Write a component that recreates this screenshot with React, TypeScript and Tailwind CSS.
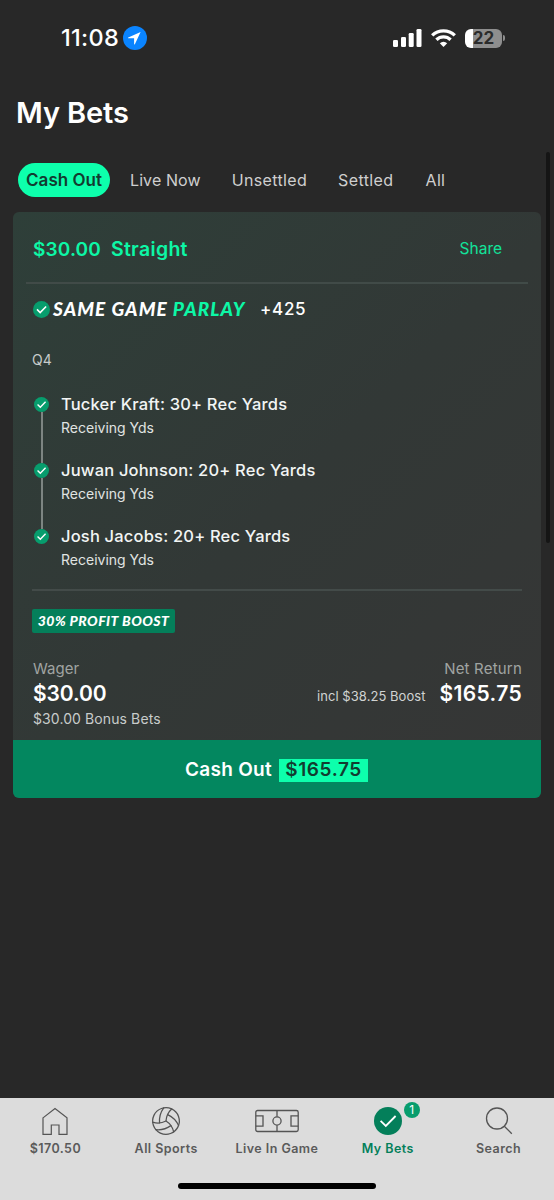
import React from 'react';
import { Volleyball } from 'lucide-react';

interface Leg {
  player: string;
  market: string;
}

const tabs = [
  { label: 'Live Now', className: 'ml-5 tracking-[0.1px]' },
  { label: 'Unsettled', className: 'ml-[31px] tracking-[0.35px]' },
  { label: 'Settled', className: 'ml-[31px] tracking-[0.4px]' },
  { label: 'All', className: 'ml-8 tracking-[0.3px]' },
];

const legs: Leg[] = [
  { player: 'Tucker Kraft: 30+ Rec Yards', market: 'Receiving Yds' },
  { player: 'Juwan Johnson: 20+ Rec Yards', market: 'Receiving Yds' },
  { player: 'Josh Jacobs: 20+ Rec Yards', market: 'Receiving Yds' },
];

function CheckIcon({ className, fill, strokeWidth }: { className: string; fill: string; strokeWidth: number }) {
  return (
    <svg viewBox="0 0 28 28" className={className} fill="none">
      <circle cx="14" cy="14" r="14" fill={fill} />
      <path d="M6.600 13.800l5.200 5.200L21.600 9" stroke="#fff" strokeWidth={strokeWidth} />
    </svg>
  );
}

function StatusBar() {
  return (
    <div className="flex h-[76px] shrink-0 items-center pl-[61px] pr-[49px]">
      <span className="w-[62px] text-[23.5px] leading-none font-medium text-white tracking-[0.3px] whitespace-nowrap">11:08</span>
      <svg viewBox="0 0 24 24" className="size-6">
        <circle cx="12" cy="12" r="12" fill="#0a84ff" />
        <path d="M17.6 6.1L5.3 11.4c-.5.2-.4.9.2.9h5.6v5.6c0 .6.7.7.9.2z" fill="#fff" />
      </svg>
      <div className="ml-auto flex items-center">
        <svg viewBox="0 0 29 18" className="h-[18px] w-[29px]" fill="#fff">
          <rect x="0" y="11" width="5" height="7" rx="1.3" />
          <rect x="8" y="8" width="5" height="10" rx="1.3" />
          <rect x="15.7" y="4" width="5" height="14" rx="1.3" />
          <rect x="23.5" y="0" width="5" height="18" rx="1.3" />
        </svg>
        <svg viewBox="0 0 25 18" className="ml-[9px] h-[18px] w-[25px]" fill="none" stroke="#fff" strokeWidth="3.3">
          <path d="M1.2 6.4a16.2 16.2 0 0 1 22.6 0" />
          <path d="M5.4 10.8a10.2 10.2 0 0 1 14.2 0" />
          <path d="M12.5 18l-3.7-3.8a5.3 5.3 0 0 1 7.4 0z" fill="#fff" stroke="none" />
        </svg>
        <div className="ml-[9px] flex h-[19px] w-[37px] items-center justify-center rounded-[6px] bg-[linear-gradient(90deg,#fff_0_8px,#8e8e8e_8px)]">
          <span className="text-[17px] leading-none font-bold text-[#2b2b2b]">22</span>
        </div>
        <div className="ml-px h-[6px] w-[2px] rounded-r-full bg-[#8e8e8e]" />
      </div>
    </div>
  );
}

function HomeIcon() {
  return (
    <svg viewBox="0 0 26 28" className="h-7 w-[26px]" fill="none" stroke="#545454" strokeWidth="1.2">
      <path d="M1 10.9L13 1.500l12 9.400v16.500h-8V18H9.300v9.400H1z" />
    </svg>
  );
}

function PitchIcon() {
  return (
    <svg viewBox="0 0 44 24" className="h-6 w-11" fill="none" stroke="#545454" strokeWidth="1.3">
      <rect x=".8" y="1.500" width="42.400" height="21" rx="1.800" />
      <path d="M22 1.500v6.300M22 16.200v6.300M.8 6.900h7.200v10.200H.8M43.200 6.900h-7.200v10.200h7.200" />
      <circle cx="22" cy="12" r="4.100" />
    </svg>
  );
}

function SearchIcon() {
  return (
    <svg viewBox="0 0 28 28" className="size-7" fill="none" stroke="#545454" strokeWidth="1.3">
      <circle cx="12" cy="11.500" r="10.500" />
      <path d="M19.300 19.200l7.500 7.500" />
    </svg>
  );
}

const navItems = [
  { label: '$170.50', icon: <HomeIcon />, active: false },
  { label: 'All Sports', icon: <Volleyball className="size-8 -m-0.5 rotate-[25deg] text-[#545454]" strokeWidth={0.95} />, active: false },
  { label: 'Live In Game', icon: <PitchIcon />, active: false },
  { label: 'My Bets', icon: <CheckIcon className="size-7" fill="#047f5a" strokeWidth={1.8} />, active: true, badge: 1 },
  { label: 'Search', icon: <SearchIcon />, active: false },
];

function BetCard() {
  return (
    <div className="mx-[13px] mt-[15px] flex h-[586px] shrink-0 flex-col overflow-hidden rounded-[6px] bg-[linear-gradient(135deg,#2e3f39_0%,#323836_50%,#363636_100%)]">
      <div className="mx-[13px] flex h-[72px] items-center border-b-2 border-[#414b48] pt-1 pl-[7px] pr-[26px]">
        <span className="pt-[3px] text-[19px] font-semibold text-[#0df7a6] tracking-[0.15px]">$30.00</span>
        <span className="ml-[10px] pt-[2px] text-[19.5px] font-semibold text-[#0df7a6] tracking-[0.3px]">Straight</span>
        <span className="ml-auto text-[15.5px] text-[#12e39a]">Share</span>
      </div>

      <div className="flex h-[51px] items-center pl-[20px]">
        <CheckIcon className="size-[17px]" fill="#079d6d" strokeWidth={2.6} />
        <span className="ml-[3px] w-[193px] font-['Lato'] text-[19px] font-black italic text-white tracking-[1.05px] whitespace-nowrap">
          SAME GAME <span className="text-[#0df7a6]">PARLAY</span>
        </span>
        <span className="ml-[14px] pt-px text-[17px] font-medium text-white tracking-[0.7px]">+425</span>
      </div>

      <div className="mt-[14px] pl-[19px] text-[14px] leading-[22px] text-[#c8cccb]">Q4</div>

      <div className="mt-[21px] pl-[21px]">
        {legs.map((leg, index) => (
          <div key={leg.player} className="flex h-[66px]">
            <div className="flex w-[15px] flex-col items-center pt-[5px]">
              <CheckIcon className="size-[15px] shrink-0" fill="#079d6d" strokeWidth={2.6} />
              {index < legs.length - 1 && <div className="-mb-[5px] w-[2px] flex-1 bg-[#7d8582]" />}
            </div>
            <div className="ml-3">
              <div className="text-[16.5px] leading-6 font-medium text-[#f2f5f4] tracking-[0.19px] whitespace-nowrap">{leg.player}</div>
              <div className="text-[14px] leading-6 text-[#e0e4e2]">{leg.market}</div>
            </div>
          </div>
        ))}
      </div>

      <div className="mx-[19px] -mt-[1px] border-t-2 border-[#434b49] pt-[18px]">
        <div className="flex h-6 w-[143px] items-center justify-center rounded-[2px] bg-[#047f5a] pb-px">
          <span className="font-['Lato'] text-[14px] font-black italic text-white tracking-[0.47px] whitespace-nowrap">30% PROFIT BOOST</span>
        </div>
        <div className="mt-[25px] flex justify-between pl-px text-[15px] leading-[22px] text-[#a0a4a2]">
          <span>Wager</span>
          <span className="tracking-[0.2px]">Net Return</span>
        </div>
        <div className="flex h-7 items-center pl-px text-white">
          <span className="text-[21px] font-semibold tracking-[-0.1px]">$30.00</span>
          <span className="ml-auto pt-[5px] text-[13px] text-[#d0d3d2] tracking-[0.05px]">incl $38.25 Boost</span>
          <span className="ml-[14px] text-[21px] font-semibold tracking-[0.35px]">$165.75</span>
        </div>
        <div className="-mt-px pl-px text-[14px] leading-6 text-[#c8cccb] tracking-[0.1px]">$30.00 Bonus Bets</div>
      </div>

      <button className="mt-auto flex h-[58px] w-full shrink-0 items-center justify-center bg-[#03875f] pt-[2px] pr-px text-[19px] font-semibold text-white">
        <span className="tracking-[0.3px]">Cash Out</span>
        <span className="ml-[7px] flex h-[23px] w-[89px] items-center justify-center bg-[#0dffac] text-[#123c30] tracking-[0.6px]">$165.75</span>
      </button>
    </div>
  );
}

export default function App() {
  return (
    <div className="relative flex h-[1200px] w-[554px] flex-col overflow-hidden bg-[#282828] font-['Inter',sans-serif]">
      <StatusBar />

      <h1 className="mt-[17px] pl-4 text-[29px] leading-10 font-semibold text-white tracking-[-0.1px]">My Bets</h1>

      <div className="mt-[30px] flex h-[34px] shrink-0 items-center pl-[18px] text-[16px] text-[#cfcfcf]">
        <button className="flex h-[34px] w-[92px] items-center justify-center rounded-full bg-[#0dffac] pt-px text-[17px] font-semibold text-[#123c30] whitespace-nowrap">
          Cash Out
        </button>
        {tabs.map((tab) => (
          <button key={tab.label} className={tab.className}>{tab.label}</button>
        ))}
      </div>

      <BetCard />

      {/* scroll indicator */}
      <div className="absolute right-[4px] top-[152px] h-[391px] w-[4px] rounded-full bg-[#151515]" />

      <nav className="mt-auto h-[102px] shrink-0 bg-[#dcdcdc]">
        <div className="flex">
          {navItems.map((item) => (
            <div key={item.label} className="flex flex-1 flex-col items-center pt-[9px]">
              <div className="relative flex h-7 items-center">
                {item.icon}
                {item.badge && (
                  <span className="absolute -right-[18px] -top-[5px] flex size-4 items-center justify-center rounded-full bg-[#079d6d] text-[12px] text-white">
                    {item.badge}
                  </span>
                )}
              </div>
              <span className={`mt-1 text-[12.5px] leading-5 font-semibold tracking-[0.45px] whitespace-nowrap ${item.active ? 'text-[#047f5a]' : 'text-[#5a5a5a]'}`}>
                {item.label}
              </span>
            </div>
          ))}
        </div>
        <div className="mx-auto mt-6 h-[6px] w-[198px] rounded-full bg-black" />
      </nav>
    </div>
  );
}
